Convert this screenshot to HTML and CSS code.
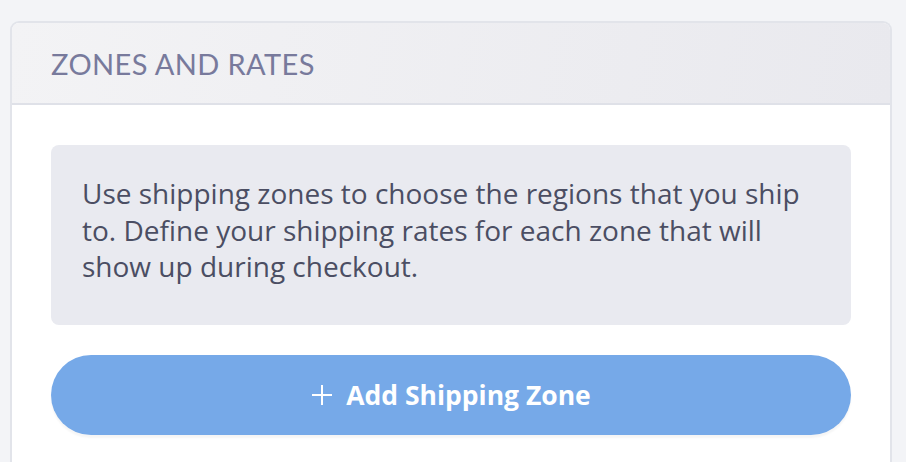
FILE: index.html
```
<!DOCTYPE html>
<html>
<head>
<meta charset="utf-8">
<link rel="stylesheet" href="styles.css">
</head>
<body>
<div class="page">
  <section class="card">
    <header class="card-header">
      <h2 class="card-title">ZONES AND RATES</h2>
    </header>
    <div class="card-body">
      <div class="info">
        <p class="info-text">Use shipping zones to choose the regions that you ship to. Define your shipping rates for each zone that will show up during checkout.</p>
      </div>
      <button class="add-btn" type="button">
        <svg class="plus" width="22" height="22" viewBox="0 0 22 22" aria-hidden="true"><path d="M11 1V21M1 11H21" stroke="#fff" stroke-width="2" fill="none"/></svg>
        <span>Add Shipping Zone</span>
      </button>
    </div>
  </section>
</div>
</body>
</html>
```

FILE: styles.css
```
* { box-sizing: border-box; }
html, body { margin: 0; padding: 0; }
body {
  background: #f3f4f7;
  font-family: "Open Sans", sans-serif;
  width: 906px;
  height: 462px;
  overflow: hidden;
}
.page {
  padding: 21px 14px 0 10px;
}
.card {
  border: 2px solid #e2e4ea;
  border-bottom: none;
  border-radius: 9px 9px 0 0;
  background: #fff;
  overflow: hidden;
}
.card-header {
  height: 82px;
  background: linear-gradient(100deg, #f3f3f5 0%, #e9e9ee 100%);
  border-bottom: 2px solid #dfe1e8;
  display: flex;
  align-items: center;
  padding-left: 39px;
}
.card-title {
  margin: 0;
  font-family: Lato, sans-serif;
  font-weight: 400;
  font-size: 29px;
  color: #787a9c;
  letter-spacing: 0.4px;
}
.card-body {
  padding: 40px 39px 40px 39px;
  display: flex;
  flex-direction: column;
  gap: 30px;
}
.info {
  background: #e9eaf0;
  border-radius: 8px;
  height: 180px;
  padding: 30px 31px;
}
.info-text {
  margin: 0;
  font-size: 28px;
  line-height: 36.5px;
  color: #4b4e63;
}
.add-btn {
  height: 80px;
  border: none;
  border-radius: 40px;
  background: #76a9e8;
  box-shadow: 0 3px 2px rgba(0,0,0,0.04);
  color: #fff;
  font-family: "Open Sans", sans-serif;
  font-weight: 700;
  font-size: 26.5px;
  display: flex;
  align-items: center;
  justify-content: center;
  gap: 13px;
  padding: 0;
}
.plus { display: block; }
```
